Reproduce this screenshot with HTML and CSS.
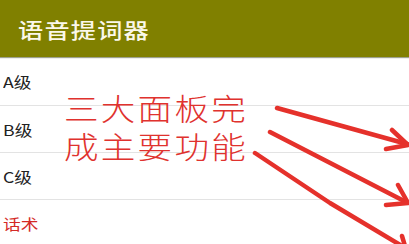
FILE: index.html
```html
<!DOCTYPE html>
<html>
<head>
<meta charset="utf-8">
<link rel="stylesheet" href="styles.css">
</head>
<body>
<div class="app">
  <header class="bar"><span class="title">语音提词器</span></header>
  <ul class="list">
    <li class="row first"><span class="label">A级</span></li>
    <li class="row"><span class="label">B级</span></li>
    <li class="row"><span class="label">C级</span></li>
    <li class="row red"><span class="label">话术</span></li>
  </ul>
  <div class="note">三大面板完<br>成主要功能</div>
  <svg class="arrows" width="409" height="244" viewBox="0 0 409 244">
    <g fill="none" stroke="#e5312b" stroke-width="4.5" stroke-linecap="round" stroke-linejoin="round">
      <path d="M277 108 L407 144"/>
      <path d="M392 130 L408 145 L386 149"/>
      <path d="M270 132 L406 202"/>
      <path d="M398 185 L408 203 L386 205"/>
      <path d="M255 153 L330 203 L402 246"/>
      <path d="M402 236 L405 246"/>
    </g>
  </svg>
</div>
</body>
</html>
```
FILE: styles.css
```css
* { box-sizing: border-box; }
html, body { margin: 0; padding: 0; background: #fff; }
body { font-family: "Noto Sans CJK SC", "Noto Sans", sans-serif; overflow: hidden; }
.app { position: relative; width: 409px; height: 244px; overflow: hidden; }
.bar {
  height: 57px;
  background: #808000;
  display: flex;
  align-items: center;
  padding-left: 18px;
  box-shadow: 0 1px 1px rgba(60, 70, 30, 0.5);
}
.title {
  color: #fbf8ea;
  font-size: 21px;
  font-weight: 500;
  letter-spacing: 1px;
  line-height: 1;
  margin-top: 1px;
  display: inline-block;
  transform: scaleX(1.2);
  transform-origin: left center;
}
.list { list-style: none; margin: 0; padding: 0; }
.row {
  height: 47px;
  display: flex;
  align-items: center;
  padding-left: 3px;
  color: #222;
  border-bottom: 1px solid #e3e3e3;
}
.label {
  display: inline-block;
  font-size: 15px;
  transform: scaleX(1.18);
  transform-origin: left center;
}
.row.first { height: 49px; padding-top: 1px; }
.row.red { color: #d42a26; border-bottom: none; }
.note {
  position: absolute;
  left: 64px;
  top: 88px;
  color: #e0322e;
  font-size: 30px;
  letter-spacing: 2px;
  line-height: 38px;
  font-weight: 300;
  transform: scaleX(1.15);
  transform-origin: left top;
}
.arrows { position: absolute; left: 0; top: 0; }
```
